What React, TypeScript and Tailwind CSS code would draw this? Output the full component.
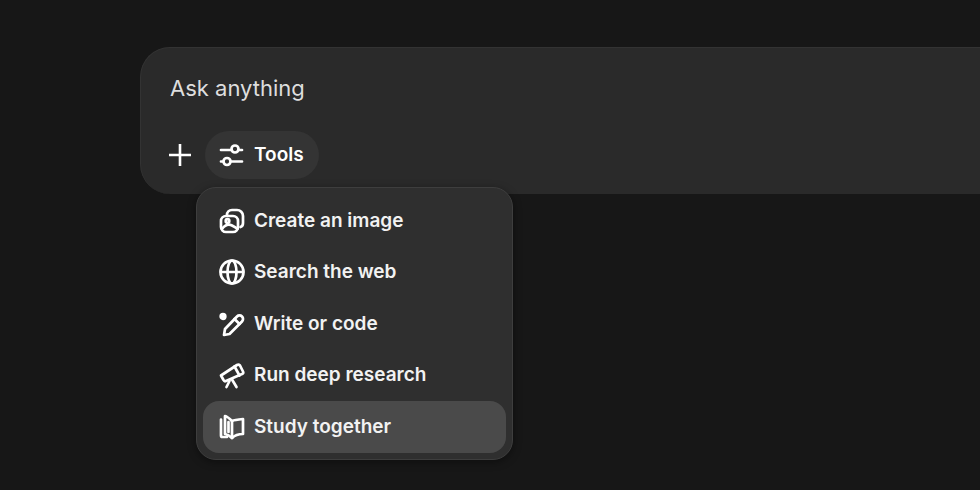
import type { ReactNode } from "react";

const iconProps = {
  width: 28,
  height: 28,
  viewBox: "0 0 28 28",
  fill: "none",
  stroke: "currentColor",
  strokeWidth: 2.7,
  strokeLinecap: "round" as const,
  strokeLinejoin: "round" as const,
};

const PlusIcon = () => (
  <svg width="24" height="24" viewBox="0 0 24 24" fill="none" stroke="currentColor" strokeWidth="2.600">
    <path d="M12 1v22M1 12h22" />
  </svg>
);

const ToolsIcon = () => (
  <svg {...iconProps}>
    <path d="M4 9h10M22 9h3M4 20.500h2M14.500 20.500H25" />
    <circle cx="18" cy="8" r="3.500" />
    <circle cx="10" cy="20.500" r="3.500" />
  </svg>
);

const ImageIcon = () => (
  <svg {...iconProps}>
    <rect x="3" y="9" width="17" height="16" rx="5" />
    <path d="M9 8c0-3 2-5 5-5h5a6 6 0 0 1 6 6v7c0 2-1 3.500-2.500 4" />
    <circle cx="9.500" cy="14" r="1.800" />
    <path d="M4 22c3-4 7-5 10-3.500 2 1 4 2 5.500 3.500" />
  </svg>
);

const GlobeIcon = () => (
  <svg {...iconProps}>
    <circle cx="14" cy="14" r="11.500" />
    <ellipse cx="14" cy="14" rx="4.500" ry="11.500" />
    <path d="M3 14h22" />
  </svg>
);

const PencilIcon = () => (
  <svg {...iconProps}>
    <path d="M6 25l1-6L19 6.500a3.500 3.500 0 0 1 5 5L11.500 24z" />
    <path d="M16.500 9l5 5" />
    <circle cx="5" cy="6.500" r="2.300" fill="currentColor" />
  </svg>
);

const TelescopeIcon = () => (
  <svg {...iconProps}>
    <path d="M3 14.500l16-10.500c1-.5 2-.5 3 .5l3 6c.5 1 0 2-1 2.500l-16 7c-1 .5-2 0-2.500-1z" />
    <path d="M16.500 5.500l5 9" />
    <path d="M14 18.500l4.500 7.500M11.500 20l-3 6" />
  </svg>
);

const BookIcon = () => (
  <svg {...iconProps}>
    <path d="M14 8c-2-2-4.500-4.500-7-5v18c3 .5 5 2 7 4 2-2 6-4 11-4V6c-5 .5-9 1-11 2z" />
    <path d="M14 8v17M3 6.500v16c0 1 .5 1.500 1.500 1.500H9" />
    <path d="M10.500 9v10" />
  </svg>
);

const MenuItem = ({
  icon,
  label,
  active,
}: {
  icon: ReactNode;
  label: string;
  active?: boolean;
}) => (
  <div
    className={`flex h-[51.5px] items-center gap-[8px] rounded-[16px] pl-[15px] ${
      active ? "bg-[#4a4a4a]" : ""
    }`}
  >
    {icon}
    <span className="text-[19px] font-semibold text-[#f2f2f2]">{label}</span>
  </div>
);

const App = () => {
  return (
    <div
      className="h-[490px] w-[980px] overflow-hidden bg-[#171717] pl-[140px] pt-[47px]"
      style={{ fontFamily: "Inter, sans-serif" }}
    >
      <div className="relative h-[147px] w-[900px] rounded-l-[30px] border-t border-l border-[#333333] bg-[#2a2a2a] pl-[29px] pt-[24px]">
        <p className="text-[22px] leading-[32px] text-[#dedede]">Ask anything</p>
        <div className="-ml-[2px] mt-[27px] flex items-center gap-[13px] text-white">
          <PlusIcon />
          <div className="flex h-[48px] items-center gap-[9px] rounded-full bg-[#343434] pl-[12px] pr-[15px]">
            <ToolsIcon />
            <span className="text-[19px] font-semibold">Tools</span>
          </div>
        </div>

        <div className="absolute left-[55px] top-[139px] w-[317px] rounded-[20px] border border-[#3e3e3e] bg-[#2f2f2f] px-[6px] pb-[6px] pt-[7px] text-white shadow-[0_2px_8px_rgba(0,0,0,0.4)]">
          <MenuItem icon={<ImageIcon />} label="Create an image" />
          <MenuItem icon={<GlobeIcon />} label="Search the web" />
          <MenuItem icon={<PencilIcon />} label="Write or code" />
          <MenuItem icon={<TelescopeIcon />} label="Run deep research" />
          <MenuItem icon={<BookIcon />} label="Study together" active />
        </div>
      </div>
    </div>
  );
};

export default App;
